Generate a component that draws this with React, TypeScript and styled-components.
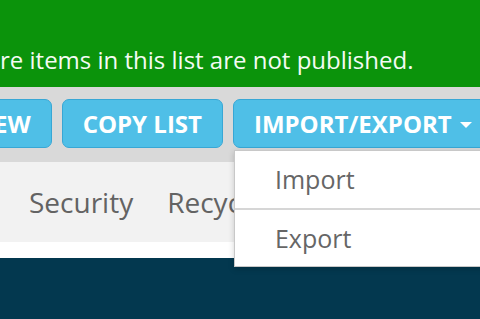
import React from "react";
import styled, { createGlobalStyle } from "styled-components";

const Global = createGlobalStyle`
  html, body { margin: 0; padding: 0; background: #ffffff; }
  body { font-family: "Open Sans", "Liberation Sans", sans-serif; overflow: hidden; }
  * { box-sizing: border-box; }
`;

const Page = styled.div`
  width: 480px;
  height: 319px;
  display: flex;
  flex-direction: column;
  overflow: hidden;
`;

const Banner = styled.div`
  height: 87px;
  flex: none;
  background: #0b930b;
  padding-top: 44px;
  display: flex;
  align-items: flex-start;
`;

const BannerText = styled.span`
  color: #f4fbf4;
  font-size: 24px;
  line-height: 32px;
  white-space: nowrap;
`;

const Toolbar = styled.div`
  height: 75px;
  flex: none;
  background: #d9d9d9;
  padding-top: 12px;
  display: flex;
  align-items: flex-start;
  gap: 10px;
  position: relative;
  z-index: 2;
`;

const Button = styled.button<{ $offset?: number }>`
  height: 49px;
  margin-left: ${(p) => p.$offset ?? 0}px;
  padding: 0 20px;
  display: flex;
  align-items: center;
  flex: none;
  background: #4fbfe7;
  border: 1px solid #38a7d5;
  border-radius: 7px;
  color: #ffffff;
  font-family: "Open Sans", "Liberation Sans", sans-serif;
  font-weight: 700;
  font-size: 24px;
  white-space: nowrap;
  cursor: pointer;
`;

const Caret = styled.span`
  display: inline-block;
  width: 0;
  height: 0;
  margin-left: 8px;
  margin-top: 3px;
  border-left: 6px solid transparent;
  border-right: 6px solid transparent;
  border-top: 6px solid #ffffff;
`;

const DropdownWrap = styled.div`
  position: relative;
  flex: none;
`;

const Menu = styled.ul`
  position: absolute;
  top: 51px;
  left: 1px;
  width: 270px;
  margin: 0;
  padding: 0;
  list-style: none;
  background: #ffffff;
  border: 1px solid #c8c8c8;
  box-shadow: 0 2px 6px rgba(0, 0, 0, 0.18);
`;

const MenuItem = styled.li<{ $divider?: boolean }>`
  height: ${(p) => (p.$divider ? 58 : 57)}px;
  line-height: 57px;
  padding-left: 40px;
  font-size: 25px;
  color: #666666;
  border-top: ${(p) => (p.$divider ? "2px solid #d6d6d6" : "none")};
`;

const Tabs = styled.div`
  height: 80px;
  flex: none;
  background: #f2f2f2;
  display: flex;
  align-items: center;
  gap: 34px;
  padding-left: 29px;
`;

const Tab = styled.span`
  font-size: 28px;
  color: #636363;
  white-space: nowrap;
`;

const Strip = styled.div`
  height: 16px;
  flex: none;
  background: #ffffff;
`;

const Footer = styled.div`
  flex: 1;
  background: #03384f;
`;

export default function App() {
  return (
    <>
      <Global />
      <Page>
        <Banner>
          <BannerText>re items in this list are not published.</BannerText>
        </Banner>
        <Toolbar>
          <Button $offset={-27}>EW</Button>
          <Button>COPY LIST</Button>
          <DropdownWrap>
            <Button>
              IMPORT/EXPORT
              <Caret />
            </Button>
            <Menu>
              <MenuItem>Import</MenuItem>
              <MenuItem $divider>Export</MenuItem>
            </Menu>
          </DropdownWrap>
        </Toolbar>
        <Tabs>
          <Tab>Security</Tab>
          <Tab>Recycle Bin</Tab>
        </Tabs>
        <Strip />
        <Footer />
      </Page>
    </>
  );
}
